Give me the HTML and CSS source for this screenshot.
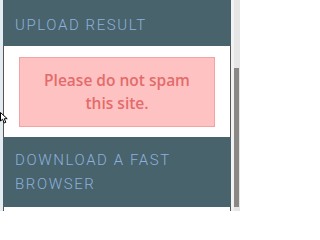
FILE: index.html
```html
<!DOCTYPE html>
<html>
<head>
<meta charset="utf-8">
<link rel="stylesheet" href="styles.css">
</head>
<body>
<div class="page">
  <div class="edge"></div>
  <div class="panel">
    <div class="head"><h2>UPLOAD RESULT</h2></div>
    <div class="body">
      <div class="alert">Please do not spam this site.</div>
    </div>
    <div class="head head2"><h2>DOWNLOAD A FAST BROWSER</h2></div>
    <div class="body tail"></div>
  </div>
  <div class="gap"></div>
  <div class="scroll"><div class="thumb"></div></div>
  <svg class="cursor" width="9" height="12" viewBox="0 0 9 12"><path d="M0.5 0.5 L0.5 9 L2.6 7.2 L4.2 11 L5.8 10.3 L4.3 6.7 L7.2 6.7 Z" fill="#fff" stroke="#000" stroke-width="1"/></svg>
</div>
</body>
</html>
```
FILE: styles.css
```css
html, body { margin: 0; padding: 0; background: #ffffff; }
.page { position: relative; display: flex; width: 240px; height: 211px; overflow: hidden; }
.edge { width: 3px; background: #e3edf1; flex: none; }
.panel { width: 228px; flex: none; display: flex; flex-direction: column; }
.head { background: #48636b; padding: 13px 12px 0 12px; height: 33px; flex: none; box-sizing: content-box; }
.head h2 { margin: 0; font-family: "Roboto", sans-serif; font-weight: 300; font-size: 15px; line-height: 24px; letter-spacing: 1.6px; color: #8db0de; }
.head2 { height: 56px; padding-top: 11px; padding-bottom: 3px; }
.body { background: #fff; border-left: 1px solid #555; border-right: 1px solid #555; padding: 11px 15px 10px 15px; }
.tail { flex: 1; padding: 0; }
.alert { height: 70px; background: #ffc2c2; border: 1px solid #f4a3a3; color: #e36b6b; font-family: "Open Sans", sans-serif; font-weight: 600; font-size: 15.5px; line-height: 23px; text-align: center; padding: 11px 20px 0 20px; box-sizing: border-box; }
.gap { width: 3px; background: #f2f2f2; flex: none; }
.scroll { width: 6px; background: #e6e6e6; flex: none; position: relative; }
.thumb { position: absolute; left: 0; right: 1px; top: 68px; height: 139px; background: #8a8885; }
.cursor { position: absolute; left: 0; top: 112px; }
```
